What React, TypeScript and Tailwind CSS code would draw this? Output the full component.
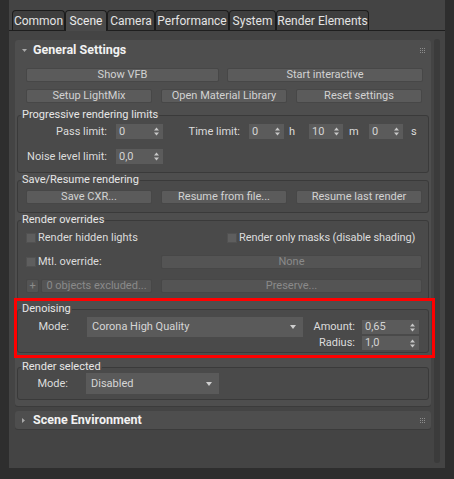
import React from "react";

function Arrows() {
  return (
    <svg width="5" height="9" viewBox="0 0 5 9" className="shrink-0">
      <path d="M2.5 0.5 L5 3.5 L0 3.5 Z" fill="#c8c8c8" />
      <path d="M0 5.5 L5 5.5 L2.5 8.5 Z" fill="#c8c8c8" />
    </svg>
  );
}

function Spin({ w, v, h = "h-[15px]" }: { w: string; v: string; h?: string }) {
  return (
    <div className={`${w} ${h} shrink-0 bg-[#5b5b5b] flex items-center justify-between pl-[3px] pr-[4px] text-[#d4d4d4]`}>
      <span>{v}</span>
      <Arrows />
    </div>
  );
}

function Btn({ w, children, disabled }: { w: string; children: React.ReactNode; disabled?: boolean }) {
  return (
    <div
      className={`${w} h-[14px] shrink-0 rounded-[2px] border border-[#474747] flex items-center justify-center leading-[12px] ${
        disabled ? "bg-[#545454] text-[#8a8a8a]" : "bg-[#5b5b5b] text-[#d2d2d2]"
      }`}
    >
      {children}
    </div>
  );
}

function Drop({ w, v, h }: { w: string; v: string; h: string }) {
  return (
    <div className={`${w} ${h} shrink-0 bg-[#5a5a5a] flex items-center justify-between pl-[5px] pr-[7px] text-[#d6d6d6]`}>
      <span>{v}</span>
      <svg width="6" height="4" viewBox="0 0 6 4">
        <path d="M0 0 L6 0 L3 4 Z" fill="#cfcfcf" />
      </svg>
    </div>
  );
}

function Check() {
  return <div className="w-[10px] h-[10px] shrink-0 bg-[#5e5e5e] border border-[#515151]" />;
}

function Grip() {
  return (
    <div className="grid grid-cols-3 gap-[1px] w-[5px]">
      {Array.from({ length: 9 }).map((_, i) => (
        <div key={i} className="w-[1px] h-[1px] bg-[#8c8c8c]" />
      ))}
    </div>
  );
}

function Group({ title, className, children }: { title: string; className: string; children: React.ReactNode }) {
  return (
    <fieldset className={`border border-[#3a3a3a] rounded-[3px] bg-[#4a4a4a] ${className}`}>
      <legend className="ml-[3px] px-[1px] leading-[14px] text-[#e6e6e6]">{title}</legend>
      {children}
    </fieldset>
  );
}

const tabs: [string, string, boolean][] = [
  ["Common", "w-[53px]", false],
  ["Scene", "w-[42px]", true],
  ["Camera", "w-[48px]", false],
  ["Performance", "w-[74px]", false],
  ["System", "w-[47px]", false],
  ["Render Elements", "w-[93px]", false],
];

export default function App() {
  return (
    <div className="w-[454px] h-[479px] bg-[#2e2e2e] font-[Roboto,sans-serif] text-[11px] leading-[14px] text-[#dcdcdc] overflow-hidden relative">
      <div className="ml-[9px] w-[436px] h-[468px] bg-[#444444] flex flex-col">
        <div className="h-[31px] pt-[10px] pl-[3px] border-b border-[#1e1e1e] flex items-end">
          {tabs.map(([t, w, a]) => (
            <div
              key={t}
              className={`${w} h-[20px] shrink-0 rounded-t-[4px] border border-b-0 border-[#1c1c1c] flex items-center justify-center text-[12px] ${
                a ? "bg-[#4a4a4a] text-[#ececec] mb-[-1px] h-[21px] pb-[1px]" : "bg-[#3e3e3e] text-[#e4e4e4]"
              }`}
            >
              {t}
            </div>
          ))}
        </div>
        <div className="flex pl-[6px] pt-[9px]">
          <div className="w-[416px] flex flex-col gap-[5px]">
            {/* General Settings */}
            <div className="rounded-[3px] bg-[#4e4e4e] shadow-[0_1px_0_#3b3b3b] pb-[6px] px-[2px]">
              <div className="h-[20px] flex items-center pl-[5px] pr-[4px]">
                <svg width="5" height="3" viewBox="0 0 5 3" className="shrink-0">
                  <path d="M0 0 L5 0 L2.5 3 Z" fill="#a8a8a8" />
                </svg>
                <span className="ml-[6px] font-bold text-[12.5px] text-[#f2f2f2]">General Settings</span>
                <div className="ml-auto">
                  <Grip />
                </div>
              </div>
              <div className="flex gap-[8px] ml-[9px] mt-[8px]">
                <Btn w="w-[193px]">Show VFB</Btn>
                <Btn w="w-[196px]">Start interactive</Btn>
              </div>
              <div className="flex gap-[9px] ml-[9px] mt-[7px]">
                <Btn w="w-[126px]">Setup LightMix</Btn>
                <Btn w="w-[126px]">Open Material Library</Btn>
                <Btn w="w-[126px]">Reset settings</Btn>
              </div>

              <Group title="Progressive rendering limits" className="mt-[5px] pt-[2px] pb-[8px]">
                <div className="flex items-center">
                  <div className="w-[89px] text-right">Pass limit:</div>
                  <div className="ml-[9px]">
                    <Spin w="w-[47px]" v="0" />
                  </div>
                  <div className="w-[77px] text-right">Time limit:</div>
                  <div className="ml-[9px]">
                    <Spin w="w-[35px]" v="0" />
                  </div>
                  <div className="w-[25px] pl-[5px]">h</div>
                  <Spin w="w-[34px]" v="10" />
                  <div className="w-[26px] pl-[6px]">m</div>
                  <Spin w="w-[34px]" v="0" />
                  <div className="pl-[8px]">s</div>
                </div>
                <div className="flex items-center mt-[10px]">
                  <div className="w-[89px] text-right">Noise level limit:</div>
                  <div className="ml-[9px]">
                    <Spin w="w-[47px]" v="0,0" />
                  </div>
                </div>
              </Group>

              <Group title="Save/Resume rendering" className="pt-[3px] pb-[8px]">
                <div className="flex gap-[9px] ml-[8px]">
                  <Btn w="w-[126px]">Save CXR...</Btn>
                  <Btn w="w-[126px]">Resume from file...</Btn>
                  <Btn w="w-[126px]">Resume last render</Btn>
                </div>
              </Group>

              <Group title="Render overrides" className="pt-[3px] pb-[6px]">
                <div className="flex items-center h-[16px] ml-[8px]">
                  <div className="w-[201px] flex items-center">
                    <Check />
                    <span className="ml-[2px]">Render hidden lights</span>
                  </div>
                  <Check />
                  <span className="ml-[2px] tracking-[-0.1px]">Render only masks (disable shading)</span>
                </div>
                <div className="flex items-center h-[14px] ml-[8px] mt-[9px]">
                  <div className="w-[135px] flex items-center">
                    <Check />
                    <span className="ml-[2px]">Mtl. override:</span>
                  </div>
                  <Btn w="w-[261px]" disabled>
                    None
                  </Btn>
                </div>
                <div className="flex items-center h-[14px] ml-[8px] mt-[10px]">
                  <Btn w="w-[13px]" disabled>
                    +
                  </Btn>
                  <div className="ml-[2px]">
                    <Btn w="w-[111px]" disabled>
                      0 objects excluded...
                    </Btn>
                  </div>
                  <div className="ml-[9px]">
                    <Btn w="w-[261px]" disabled>
                      Preserve...
                    </Btn>
                  </div>
                </div>
              </Group>

              <Group title="Denoising" className="mt-[2px] pt-[1px] pb-[2px]">
                <div className="flex items-start">
                  <div className="flex items-center h-[20px]">
                    <div className="w-[51px] text-right">Mode:</div>
                    <div className="ml-[18px]">
                      <Drop w="w-[216px]" h="h-[20px]" v="Corona High Quality" />
                    </div>
                  </div>
                  <div className="flex flex-col gap-[2px] mt-[3px]">
                    <div className="flex items-center">
                      <div className="w-[52px] text-right">Amount:</div>
                      <div className="ml-[7px]">
                        <Spin w="w-[57px]" h="h-[14px]" v="0,65" />
                      </div>
                    </div>
                    <div className="flex items-center">
                      <div className="w-[52px] text-right">Radius:</div>
                      <div className="ml-[7px]">
                        <Spin w="w-[57px]" h="h-[14px]" v="1,0" />
                      </div>
                    </div>
                  </div>
                </div>
              </Group>

              <Group title="Render selected" className="mt-[7px] pb-[5px]">
                <div className="flex items-center mt-[-1px] h-[21px]">
                  <div className="w-[50px] text-right">Mode:</div>
                  <div className="ml-[18px]">
                    <Drop w="w-[133px]" h="h-[21px]" v="Disabled" />
                  </div>
                </div>
              </Group>
            </div>

            {/* Scene Environment */}
            <div className="h-[18px] rounded-[3px] bg-[#4e4e4e] shadow-[0_1px_0_#3b3b3b] flex items-center pl-[7px] pr-[6px]">
              <svg width="3" height="5" viewBox="0 0 3 5" className="shrink-0">
                <path d="M0 0 L3 2.5 L0 5 Z" fill="#a8a8a8" />
              </svg>
              <span className="ml-[8px] font-bold text-[12.5px] text-[#f2f2f2]">Scene Environment</span>
              <div className="ml-auto">
                <Grip />
              </div>
            </div>
          </div>
          <div className="ml-[3px] mt-[-1px] w-[6px] h-[424px] rounded-[3px] bg-[#3b3b3b]" />
        </div>
      </div>
      <div className="absolute left-[14px] top-[298px] w-[421px] h-[60px] border-[3px] border-[#ff0000]" />
    </div>
  );
}
